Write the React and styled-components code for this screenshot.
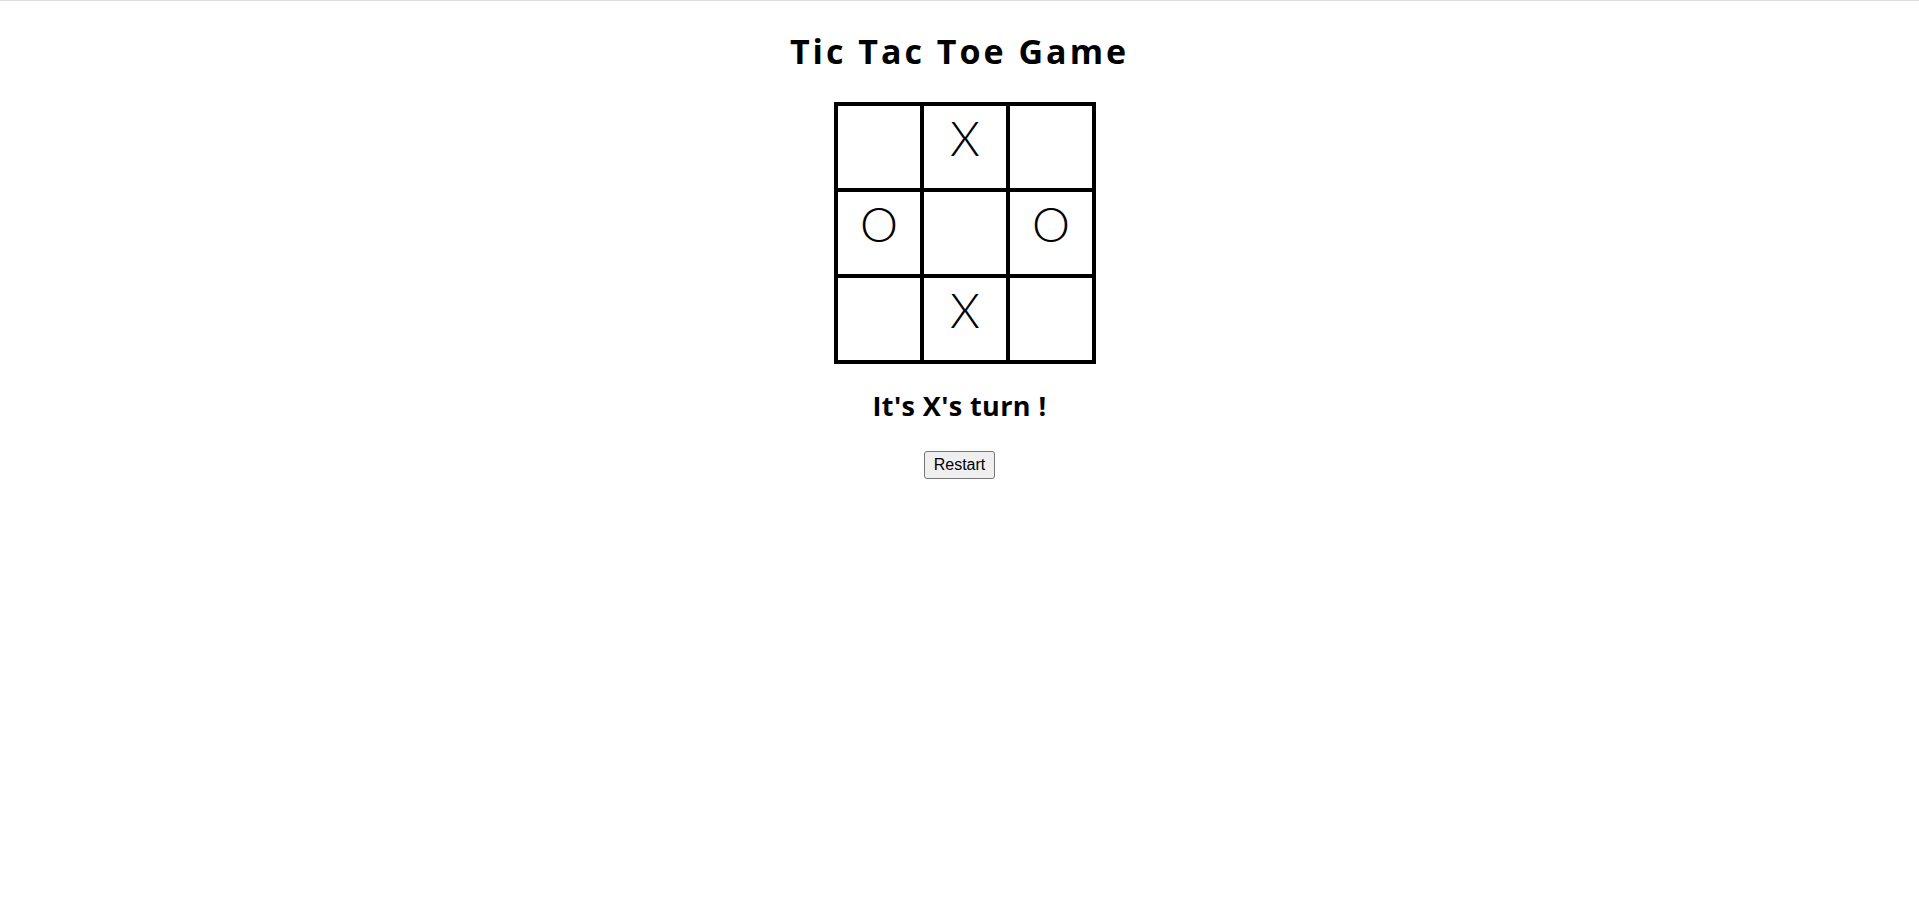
import React, { useState } from 'react';
import styled, { createGlobalStyle } from 'styled-components';

const GlobalStyle = createGlobalStyle`
  html, body {
    margin: 0;
    padding: 0;
    background: #fff;
  }
  body {
    font-family: "Open Sans", "Noto Sans", sans-serif;
    color: #000;
  }
`;

const Page = styled.div`
  display: flex;
  flex-direction: column;
  align-items: center;
  min-height: 915px;
  border-top: 1px solid #dcdcdc;
`;

const Title = styled.h1`
  margin: 30px 0 0;
  font-size: 34px;
  font-weight: 700;
  line-height: 40px;
  letter-spacing: 3px;
`;

const Board = styled.div`
  display: grid;
  grid-template-columns: repeat(3, auto);
  margin: 31px 0 0 11px;
  border: 2px solid #000;
`;

const Cell = styled.button`
  display: flex;
  justify-content: center;
  align-items: flex-start;
  padding: 8px 0 0;
  margin: 0;
  box-sizing: content-box;
  width: 82px;
  height: 74px;
  border: 2px solid #000;
  border-radius: 0;
  background: #fff;
  font-family: "Lato", "Noto Sans", sans-serif;
  font-size: 48px;
  font-weight: 300;
  line-height: 48px;
  color: #000;
  cursor: pointer;
`;

const Status = styled.h2`
  margin: 25px 0 0;
  font-size: 27px;
  font-weight: 700;
  line-height: 34px;
  letter-spacing: 0.4px;
`;

const RestartButton = styled.button`
  margin-top: 28px;
  padding: 4px 9px;
  font-family: "Liberation Sans", Arial, sans-serif;
  font-size: 16px;
  line-height: 18px;
  color: #000;
  background: #efefef;
  border: 1px solid #767676;
  border-radius: 3px;
  cursor: pointer;
`;

const START = ['', 'X', '', 'O', '', 'O', '', 'X', ''];

export default function App() {
  const [cells, setCells] = useState(START);
  const [turn, setTurn] = useState('X');

  const play = (i) => {
    if (cells[i]) return;
    const next = cells.slice();
    next[i] = turn;
    setCells(next);
    setTurn(turn === 'X' ? 'O' : 'X');
  };

  return (
    <Page>
      <GlobalStyle />
      <Title>Tic Tac Toe Game</Title>
      <Board>
        {cells.map((c, i) => (
          <Cell key={i} onClick={() => play(i)}>{c}</Cell>
        ))}
      </Board>
      <Status>It's {turn}'s turn !</Status>
      <RestartButton onClick={() => { setCells(START); setTurn('X'); }}>Restart</RestartButton>
    </Page>
  );
}
